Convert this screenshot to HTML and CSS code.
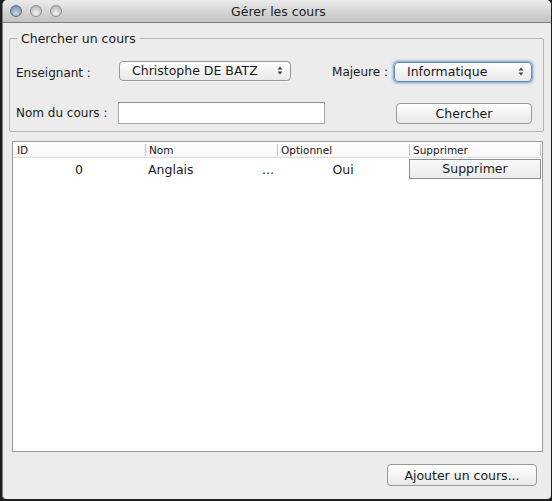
FILE: index.html
```html
<!DOCTYPE html>
<html>
<head>
<meta charset="utf-8">
<link rel="stylesheet" href="styles.css">
</head>
<body>
<div class="window">
  <div class="titlebar">
    <div class="lights">
      <span class="light close"></span>
      <span class="light"></span>
      <span class="light"></span>
    </div>
    <div class="title">Gérer les cours</div>
  </div>
  <div class="content">
    <fieldset class="search">
      <legend>Chercher un cours</legend>
      <div class="row row-top">
        <span class="lbl">Enseignant :</span>
        <div class="select teacher">
          <span class="sel-text">Christophe DE BATZ</span>
          <svg class="arrows" width="6" height="9" viewBox="0 0 6 9"><path d="M3 0.5 L5.5 3.5 H0.5 Z M3 8.5 L5.5 5.5 H0.5 Z" fill="#444"/></svg>
        </div>
        <span class="lbl-right">Majeure :</span>
        <div class="select major">
          <span class="sel-text">Informatique</span>
          <svg class="arrows" width="6" height="9" viewBox="0 0 6 9"><path d="M3 0.5 L5.5 3.5 H0.5 Z M3 8.5 L5.5 5.5 H0.5 Z" fill="#444"/></svg>
        </div>
      </div>
      <div class="row row-bottom">
        <span class="lbl">Nom du cours :</span>
        <div class="textfield"></div>
        <button class="btn search-btn">Chercher</button>
      </div>
    </fieldset>
    <div class="table">
      <div class="thead">
        <div class="th first">ID</div>
        <div class="th">Nom</div>
        <div class="th">Optionnel</div>
        <div class="th last">Supprimer</div>
      </div>
      <div class="tr">
        <div class="td center">0</div>
        <div class="td name"><span>Anglais</span><span class="dots">...</span></div>
        <div class="td center">Oui</div>
        <div class="td btn-cell"><div class="row-btn">Supprimer</div></div>
      </div>
    </div>
    <div class="footer">
      <button class="btn add-btn">Ajouter un cours...</button>
    </div>
  </div>
</div>
</body>
</html>
```
FILE: styles.css
```css
* { box-sizing: border-box; }
html, body { margin: 0; padding: 0; }
body {
  width: 552px;
  height: 501px;
  background: #1c1f1c;
  padding-left: 2px;
  font-family: "DejaVu Sans", sans-serif;
  font-size: 12px;
  color: #1a1a1a;
  overflow: hidden;
}
.window {
  width: 549px;
  height: 499px;
  background: #ececec;
  border-left: 1px solid #7d7d7d;
  border-radius: 5px 5px 4px 4px;
  overflow: hidden;
  display: flex;
  flex-direction: column;
}
.titlebar {
  height: 23px;
  flex: none;
  background: linear-gradient(#ebebeb, #d6d6d6 50%, #c3c3c3);
  border-bottom: 1px solid #7c7c7c;
  display: flex;
  align-items: center;
}
.lights {
  display: flex;
  gap: 8px;
  padding-left: 7px;
}
.light {
  width: 12px;
  height: 12px;
  border-radius: 50%;
  border: 1px solid #8e8e8e;
  background: radial-gradient(circle at 50% 70%, #f4f4f4, #c6c6c6 60%, #a9a9a9);
}
.light.close {
  border-color: #5f7184;
  background: radial-gradient(circle at 50% 70%, #c9d7e4, #8fa4b8 60%, #6c8298);
}
.title {
  flex: 1;
  text-align: center;
  font-size: 12.5px;
  color: #222;
  margin-left: -56px;
  padding-top: 1px;
}
.content {
  flex: 1;
  display: flex;
  flex-direction: column;
  padding: 0 7px 0 6px;
}
.search {
  margin: 8px 0 0 0;
  padding: 14px 11px 7px 6px;
  border: 1px solid #b4b4b4;
  border-radius: 2px;
  min-width: 0;
}
.search legend {
  padding: 0 4px;
  margin-left: 1px;
  font-size: 12.5px;
  line-height: 15px;
}
.row {
  display: flex;
  align-items: center;
}
.row-top { height: 21px; }
.row-bottom { height: 22px; margin-top: 21px; }
.lbl {
  width: 103px;
  flex: none;
}
.row-top .lbl { padding-top: 4px; }
.row-bottom .lbl { width: 102px; }
.lbl-right {
  margin-left: auto;
  margin-right: 6px;
  padding-top: 3px;
}
.select {
  height: 20px;
  flex: none;
  border: 1px solid #989898;
  border-radius: 4px;
  background: linear-gradient(#ffffff, #f3f3f3 50%, #e9e9e9);
  display: flex;
  align-items: center;
  padding: 0 7px 0 12px;
  box-shadow: 0 1px 0 rgba(255,255,255,0.6);
  font-size: 12.5px;
}
.select .sel-text { flex: 1; }
.teacher { width: 172px; }
.major {
  width: 138px;
  border-color: #5f87b7;
  box-shadow: 0 0 0 1px #93b4dc, 0 0 2px 2px rgba(120,160,215,0.5);
  margin-top: 2px;
}
.textfield {
  width: 207px;
  height: 22px;
  flex: none;
  background: #fff;
  border: 1px solid #a9a9a9;
  border-top-color: #8f8f8f;
}
.btn {
  font-family: "DejaVu Sans", sans-serif;
  font-size: 12.5px;
  color: #1a1a1a;
  border: 1px solid #989898;
  border-radius: 4px;
  background: linear-gradient(#ffffff, #f4f4f4 50%, #e8e8e8);
  padding: 0;
  height: 21px;
  flex: none;
}
.search-btn {
  width: 136px;
  margin-left: auto;
}
.table {
  margin: 9px 1px 0 3px;
  height: 311px;
  background: #fff;
  border: 1px solid #9b9b9b;
  flex: none;
}
.thead {
  display: grid;
  grid-template-columns: 132px 132px 132px 1fr;
  height: 16px;
  padding-top: 1px;
  border-bottom: 1px solid #dcdcdc;
  background: linear-gradient(#ffffff, #f7f7f7);
  font-size: 10.5px;
  padding-right: 1px;
}
.th {
  padding-left: 3px;
  border-left: 1px solid #c4c4c4;
  margin: 1px 0 1px;
  line-height: 12px;
}
.th.first { border-left: none; padding-left: 4px; }
.th.last { border-right: 1px solid #c4c4c4; }
.tr {
  display: grid;
  grid-template-columns: 132px 132px 132px 1fr;
  height: 21px;
  align-items: center;
  padding-top: 1px;
}
.td { font-size: 12.5px; }
.td.center { text-align: center; }
.td.name {
  display: flex;
  justify-content: space-between;
  padding-left: 3px;
  padding-right: 3px;
}
.btn-cell { height: 100%; padding: 0 1px 0 0; }
.row-btn {
  height: 20px;
  border: 1px solid #8c8c8c;
  background: linear-gradient(#f8f8f8, #ececec);
  text-align: center;
  line-height: 18px;
  font-size: 12.5px;
}
.footer {
  display: flex;
  justify-content: flex-end;
  padding: 12px 7px 0 0;
}
.add-btn {
  width: 150px;
  height: 22px;
}
```
